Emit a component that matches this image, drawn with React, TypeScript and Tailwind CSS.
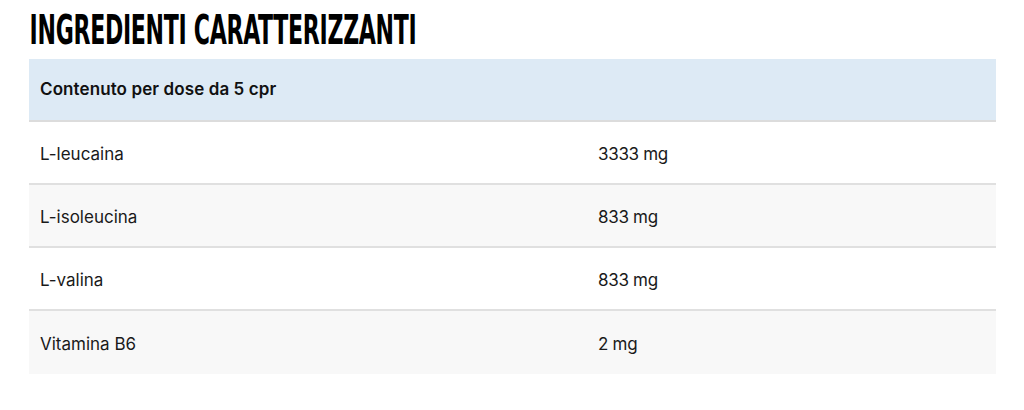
const rows = [
  { name: 'L-leucaina', value: '3333 mg' },
  { name: 'L-isoleucina', value: '833 mg' },
  { name: 'L-valina', value: '833 mg' },
  { name: 'Vitamina B6', value: '2 mg' },
];

export default function App() {
  return (
    <div className="w-[1024px] h-[410px] bg-white px-[29px] pt-[5px]" style={{ fontFamily: 'Inter, Roboto, sans-serif' }}>
      <h1
        className="text-[41px] leading-[50px] font-bold text-black tracking-[-0.5px] origin-left scale-x-[0.598] whitespace-nowrap pl-[1px]"
        style={{ fontFamily: '"Liberation Sans Narrow", "DejaVu Sans Condensed", Roboto, sans-serif' }}
      >
        INGREDIENTI CARATTERIZZANTI
      </h1>
      <div className="mt-[4px] w-[967px] text-[17px] text-[#1a1a1a]">
        <div className="h-[63px] bg-[#ddeaf5] border-b-2 border-[#dcdcdc] flex items-center px-[11px] pt-[1px] font-semibold text-[#111] tracking-[0.1px]">
          Contenuto per dose da 5 cpr
        </div>
        {rows.map((r, i) => (
          <div
            key={r.name}
            className={`grid grid-cols-[558px_1fr] h-[63px] items-center pt-[4px] ${i % 2 === 1 ? 'bg-[#f8f8f8]' : 'bg-white'} ${i < rows.length - 1 ? 'border-b-2 border-[#e0e0e0]' : ''}`}
          >
            <div className="px-[11px]">{r.name}</div>
            <div className="px-[11px] tracking-[-0.3px]">{r.value}</div>
          </div>
        ))}
      </div>
    </div>
  );
}
